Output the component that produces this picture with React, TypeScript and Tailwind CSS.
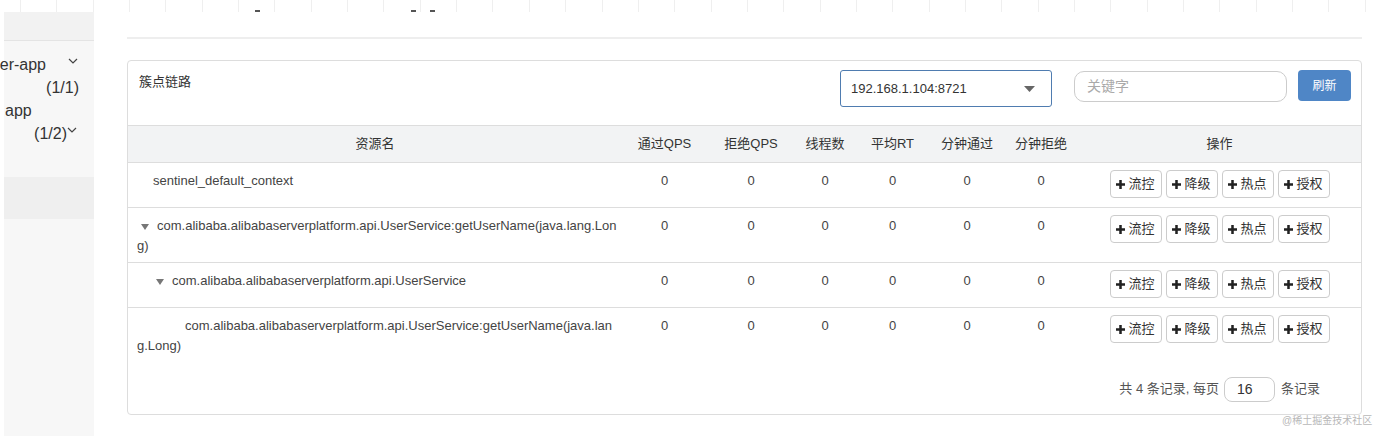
import React from "react"

const gridLines = Array.from({ length: 37 })

type Row = {
  lines: string[]
  indent: number
  arrow?: boolean
  height: string
}

const rows: Row[] = [
  { lines: ["sentinel_default_context"], indent: 16, height: "h-[45px]" },
  {
    lines: ["com.alibaba.alibabaserverplatform.api.UserService:getUserName(java.lang.Lon", "g)"],
    indent: 4,
    arrow: true,
    height: "h-[55px]",
  },
  { lines: ["com.alibaba.alibabaserverplatform.api.UserService"], indent: 19, arrow: true, height: "h-[45px]" },
  {
    lines: ["com.alibaba.alibabaserverplatform.api.UserService:getUserName(java.lan", "g.Long)"],
    indent: 48,
    height: "h-[55px]",
  },
]

const cols = "grid grid-cols-[494px_85px_88px_60px_75px_74px_74px_1fr]"
const headers = ["通过QPS", "拒绝QPS", "线程数", "平均RT", "分钟通过", "分钟拒绝"]
const actions = ["流控", "降级", "热点", "授权"]

function Plus() {
  return (
    <svg width="9" height="9" viewBox="0 0 10 10" className="shrink-0">
      <rect x="3.6" y="0" width="2.8" height="10" fill="#222" />
      <rect x="0" y="3.6" width="10" height="2.8" fill="#222" />
    </svg>
  )
}

function Chevron() {
  return (
    <svg width="10" height="6" viewBox="0 0 10 6">
      <polyline points="1,1 5,5 9,1" fill="none" stroke="#444" strokeWidth="1.2" />
    </svg>
  )
}

export default function App() {
  return (
    <div className="relative w-[1379px] h-[436px] overflow-hidden bg-white font-['Liberation_Sans','Noto_Sans_CJK_SC',sans-serif] text-[#333]">
      {/* 顶部残留表格线 */}
      <div className="relative h-[12px] flex pl-[20px]">
        {gridLines.map((_, i) => (
          <div key={i} className="w-[36.35px] h-full border-l border-[#efefef]" />
        ))}
        <div className="h-full border-l border-[#efefef]" />
        <span className="absolute left-[255px] top-[10px] w-[5px] h-[2px] bg-[#555]" />
        <span className="absolute left-[411px] top-[10px] w-[5px] h-[2px] bg-[#555]" />
        <span className="absolute left-[430px] top-[10px] w-[5px] h-[2px] bg-[#555]" />
      </div>

      <div className="flex">
        {/* 侧边栏 */}
        <div className="ml-[4px] w-[90px] h-[424px] bg-[#f7f7f7] flex flex-col text-[16px] leading-[23px] text-[#333]">
          <div className="h-[29px] bg-[#f2f2f2] border-b border-[#e4e4e4]" />
          <div className="pt-[12px] h-[136px] flex flex-col">
            <div className="flex items-center">
              <div className="w-[42px] flex justify-end whitespace-nowrap">provider-app</div>
              <div className="ml-[22px] -mt-[8px]">
                <Chevron />
              </div>
            </div>
            <div className="w-[75px] text-right">(1/1)</div>
            <div className="pl-[1px]">app</div>
            <div className="flex items-center">
              <div className="w-[63px] text-right">(1/2)</div>
              <div className="-mt-[8px]">
                <Chevron />
              </div>
            </div>
          </div>
          <div className="h-[42px] bg-[#efefef]" />
        </div>

        {/* 主内容 */}
        <div className="ml-[33px] w-[1235px] flex flex-col">
          <div className="mt-[25px] h-[2px] bg-[#eeeeee]" />

          <div className="mt-[21px] h-[355px] border border-[#dddddd] rounded-[4px] flex flex-col">
            {/* 面板头部 */}
            <div className="h-[64px] flex items-start pl-[11px] pr-[10px]">
              <div className="mt-[12px] text-[13px] leading-[18px] text-[#333]">簇点链路</div>
              <div className="ml-auto flex items-start">
                <div className="mt-[9px] w-[212px] h-[37px] border border-[#4f7cb0] rounded-[3px] flex items-center pl-[10px] pr-[16px] text-[13px] text-[#333]">
                  <span>192.168.1.104:8721</span>
                  <svg width="11" height="6" viewBox="0 0 11 6" className="ml-auto">
                    <polygon points="0,0 11,0 5.5,6" fill="#666" />
                  </svg>
                </div>
                <div className="ml-[22px] mt-[10px] w-[213px] h-[31px] border border-[#cccccc] rounded-[10px] flex items-center pl-[12px] text-[14px] text-[#aaaaaa]">
                  关键字
                </div>
                <div className="ml-[11px] mt-[9px] w-[53px] h-[31px] rounded-[4px] bg-[#4f86c6] flex items-center justify-center text-[12px] text-white">
                  刷新
                </div>
              </div>
            </div>

            {/* 表头 */}
            <div className={`${cols} h-[37px] bg-[#f2f3f4] border-t border-[#dddddd] items-center text-[13px] text-[#333]`}>
              <div className="text-center">资源名</div>
              {headers.map((h) => (
                <div key={h} className="text-center">{h}</div>
              ))}
              <div className="text-center">操作</div>
            </div>

            {/* 表体 */}
            {rows.map((r, idx) => (
              <div key={idx} className={`${cols} ${r.height} border-t border-[#dddddd] text-[13px] leading-[20px] text-[#444]`}>
                <div className="pl-[9px] pt-[8px] whitespace-nowrap">
                  {r.lines.map((line, i) => (
                    <div key={i} className="flex items-center">
                      {i === 0 && <span className="inline-block shrink-0" style={{ width: r.indent }} />}
                      {i === 0 && r.arrow && (
                        <svg width="8" height="6" viewBox="0 0 8 6" className="shrink-0 mr-[8px] mt-[2px]">
                          <polygon points="0,0 8,0 4,6" fill="#777" />
                        </svg>
                      )}
                      <span>{line}</span>
                    </div>
                  ))}
                </div>
                {headers.map((h) => (
                  <div key={h} className="pt-[8px] text-center">0</div>
                ))}
                <div className="pt-[7px] flex justify-center gap-[4px]">
                  {actions.map((a) => (
                    <div
                      key={a}
                      className="w-[52px] h-[28px] border border-[#cccccc] rounded-[4px] bg-white flex items-center justify-center gap-[3px] text-[13px] text-[#333]"
                    >
                      <Plus />
                      <span>{a}</span>
                    </div>
                  ))}
                </div>
              </div>
            ))}

            {/* 分页 */}
            <div className="flex-1 flex items-center justify-end pr-[41px] pt-[2px] text-[13px] text-[#555]">
              <span>共 4 条记录, 每页</span>
              <div className="ml-[5px] w-[51px] h-[25px] border border-[#cccccc] rounded-[8px] flex items-center pl-[12px] text-[14px] text-[#333]">
                16
              </div>
              <span className="ml-[6px]">条记录</span>
            </div>
          </div>
        </div>
      </div>

      <div className="absolute left-[1282px] top-[414px] text-[10px] text-[#b8b8b8] leading-[14px]">@稀土掘金技术社区</div>
    </div>
  )
}
